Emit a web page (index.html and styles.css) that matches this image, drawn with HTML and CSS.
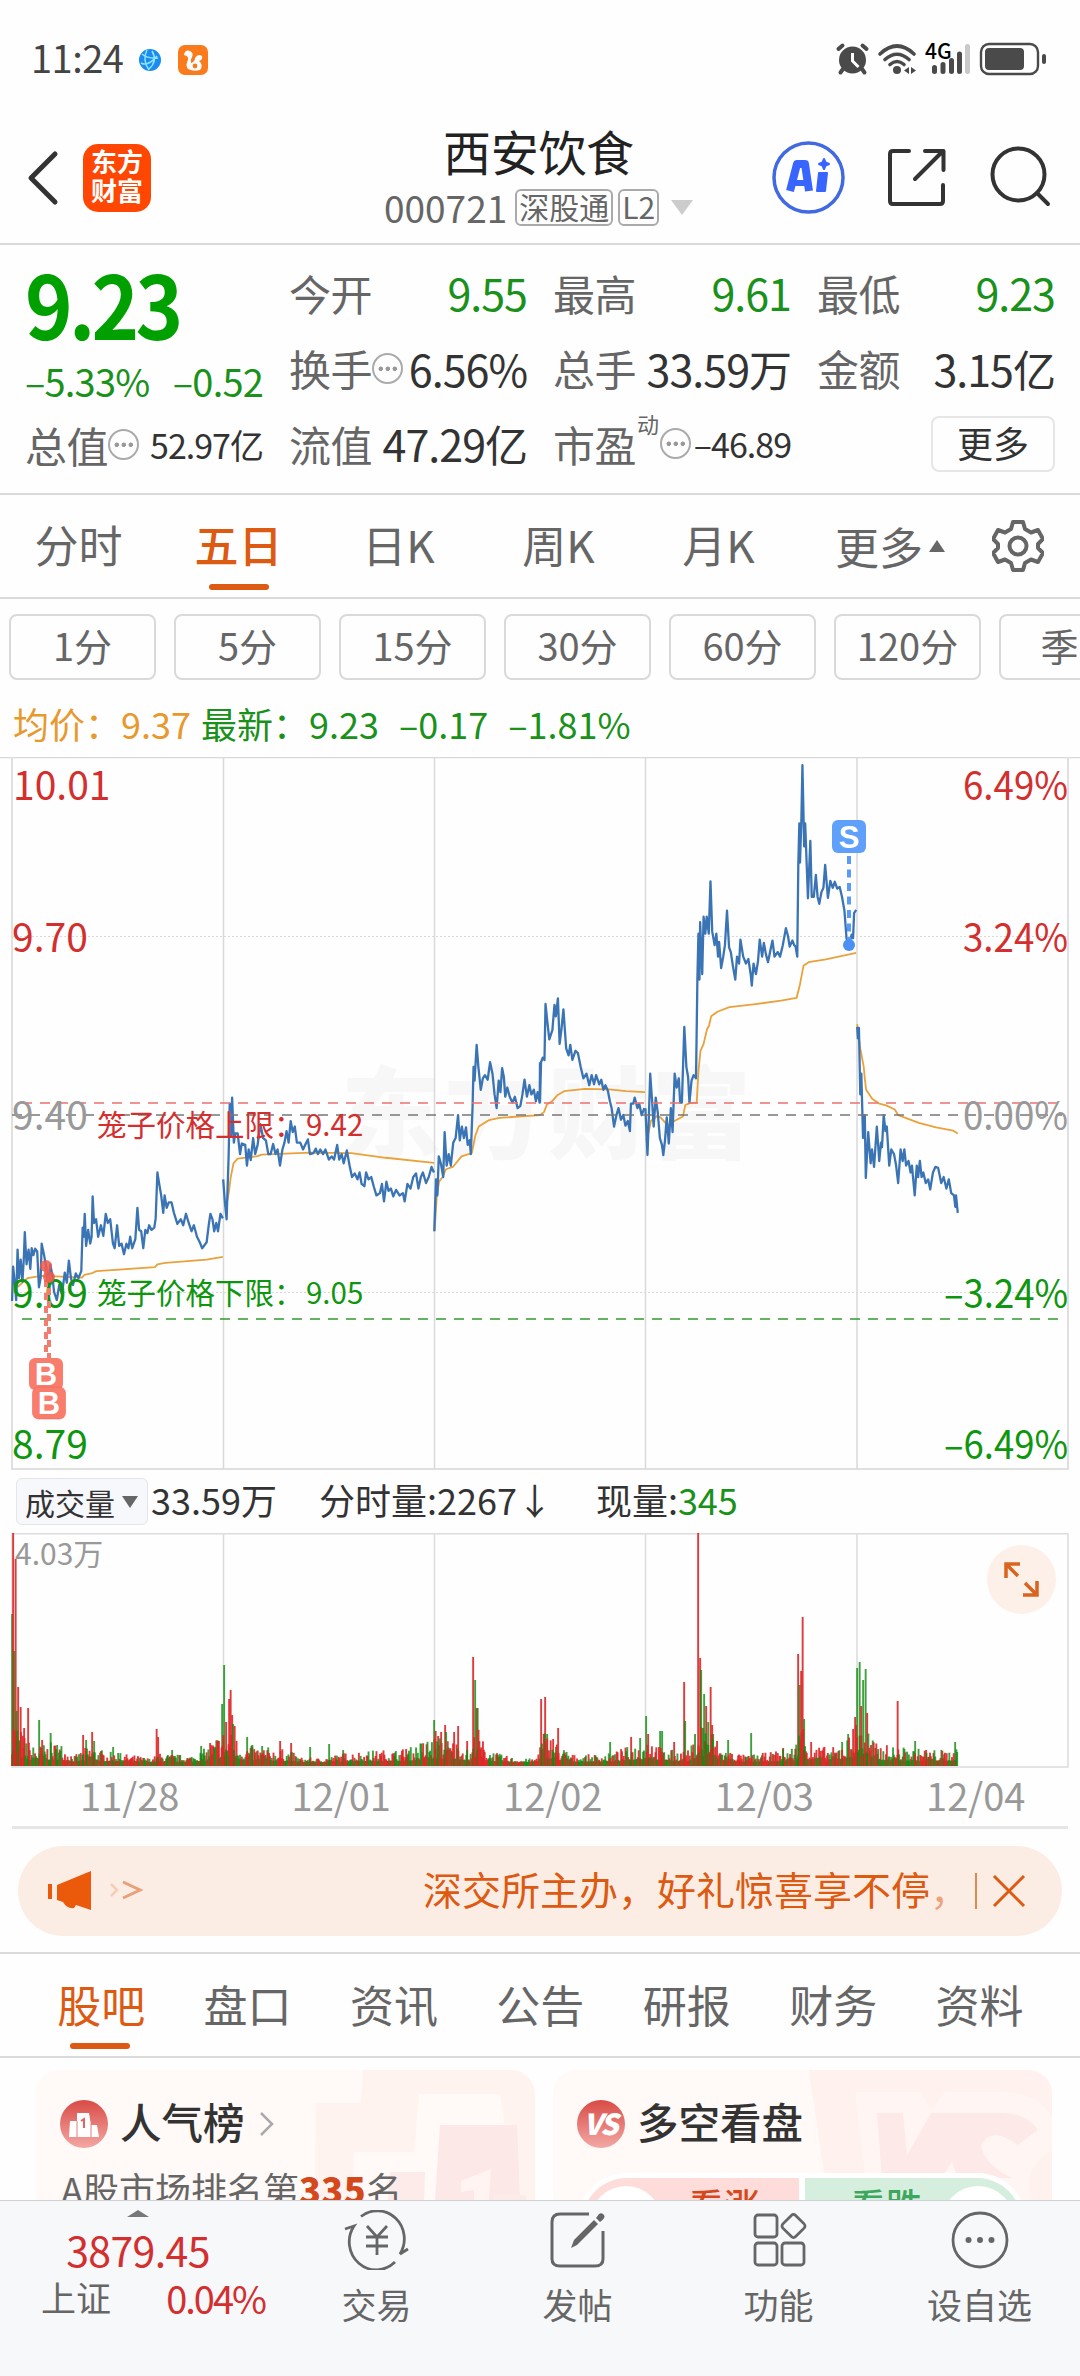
FILE: index.html
```html
<!DOCTYPE html>
<html lang="zh-CN">

<head>
    <meta charset="UTF-8">
    <meta name="viewport" content="width=device-width, initial-scale=1.0">
    <title>西安饮食 000721</title>
    <link rel="stylesheet" href="styles.css">
</head>

<body>
    <!-- 状态栏 -->
    <div class="status">
        <span class="time">11:24</span>
        <svg class="globe" width="22" height="22" viewBox="0 0 22 22">
            <circle cx="11" cy="11" r="11" fill="#1a8cf0" />
            <path d="M3 5Q9 10 19 9M8 1Q3 11 10 21M13 2Q19 12 10 20M2 14Q9 18 18 7" fill="none" stroke="#8fe3ff" stroke-width="1.5" />
        </svg>
        <svg class="uc" width="30" height="30" viewBox="0 0 30 30">
            <rect width="30" height="30" rx="7" fill="#fa7a1c" />
            <path d="M6 10Q7 4 12 6Q16 8 14 12Q12 15 13 18Q17 17 17 13Q20 8 24 11Q25 15 21 16Q26 20 22 25Q16 27 10 24Q7 20 10 15Q11 11 6 10Z" fill="#fff" />
            <circle cx="17" cy="21" r="2.4" fill="#fa7a1c" />
        </svg>
        <svg class="right" width="212" height="36" viewBox="836 42 212 36">
            <g fill="#4a4a4a">
                <circle cx="852.500" cy="60" r="13.500" />
                <path d="M843 69l-2.500 3.500M862 69l2.500 3.500M838.500 49l4-3.500M866.500 49l-4-3.500" stroke="#4a4a4a" stroke-width="4" stroke-linecap="round" />
                <path d="M852.500 53v8l6 6" fill="none" stroke="#fff" stroke-width="3" />
                <circle cx="897" cy="70" r="4" />
                <path d="M909 67v7l-5-3.500zM911 67v7l5-3.500z" />
            </g>
            <g fill="none" stroke="#4a4a4a" stroke-width="3.600" stroke-linecap="round">
                <path d="M880 54Q897 38 914 54M885 59.500Q897 49 909 59.500M890 64.500Q897 58.500 904 64.500" />
            </g>
            <g stroke="#4a4a4a" stroke-width="5" stroke-linecap="round">
                <path d="M934.500 67.500v4M943 64.500v7M951.500 60.500v11M959.500 54v17.500" />
                <path d="M967.500 46.500v25" stroke="#c9c9c9" />
            </g>
            <text x="925" y="59" class="net">4G</text>
            <rect x="981" y="44" width="57" height="30" rx="8" fill="none" stroke="#4a4a4a" stroke-width="2.400" />
            <rect x="985" y="48" width="39" height="22" rx="4" fill="#4a4a4a" />
            <rect x="1042" y="54" width="4" height="10" rx="2" fill="#4a4a4a" />
        </svg>
    </div>

    <!-- 顶部标题 -->
    <div class="header">
        <svg class="back" width="32" height="56" viewBox="0 0 32 56">
            <path d="M28 4L4 28L28 52" fill="none" stroke="#333" stroke-width="5" stroke-linecap="round" stroke-linejoin="round" />
        </svg>
        <div class="logo">东方<br>财富</div>
        <div class="title">
            <h1>西安饮食</h1>
            <div class="code">000721<i>深股通</i><i>L2</i><b></b></div>
        </div>
        <svg class="tools" width="280" height="76" viewBox="772 140 280 76">
            <circle cx="808.500" cy="177.500" r="34.500" fill="none" stroke="#4169e1" stroke-width="3.500" />
            <path d="M790 191L797 164H805L809 191" fill="none" stroke="#3864ff" stroke-width="8" stroke-linejoin="round" />
            <path d="M795 183H807" stroke="#3864ff" stroke-width="6" />
            <path d="M819 173h8l-2 18h-8zM824 159l1.500 3.500 3.500 1.500-3.500 1.500-1.500 3.500-1.500-3.500-3.500-1.500 3.500-1.500z" fill="#3864ff" stroke="#3864ff" stroke-width="2" stroke-linejoin="round" />
            <g fill="none" stroke="#333" stroke-width="4" stroke-linecap="round" stroke-linejoin="round">
                <path d="M909 151H893Q890 151 890 154V201Q890 204 893 204H940Q943 204 943 201V185M925 151H943.500V170M942 152L915 179" />
                <circle cx="1018.500" cy="174.500" r="26" />
                <path d="M1037 193L1048 204" />
            </g>
        </svg>
    </div>

    <!-- 行情 -->
    <div class="quote">
        <div class="col first">
            <div class="price">9.23</div>
            <div class="change"><span>–5.33%</span><span>–0.52</span></div>
            <div class="item"><label>总值</label><em></em><span class="v small">52.97亿</span></div>
        </div>
        <div class="col">
            <div class="item"><label>今开</label><span class="v green">9.55</span></div>
            <div class="item"><label>换手</label><em></em><span class="v">6.56%</span></div>
            <div class="item"><label>流值</label><span class="v">47.29亿</span></div>
        </div>
        <div class="col">
            <div class="item"><label>最高</label><span class="v green">9.61</span></div>
            <div class="item"><label>总手</label><span class="v">33.59万</span></div>
            <div class="item"><label>市盈</label><sup>动</sup><em></em><span class="v small">–46.89</span></div>
        </div>
        <div class="col">
            <div class="item"><label>最低</label><span class="v green">9.23</span></div>
            <div class="item"><label>金额</label><span class="v">3.15亿</span></div>
            <div class="item"><span class="more">更多</span></div>
        </div>
    </div>

    <!-- K线周期 -->
    <div class="period">
        <span>分时</span>
        <span class="on">五日</span>
        <span>日K</span>
        <span>周K</span>
        <span>月K</span>
        <span class="wide">更多<b></b></span>
        <svg width="52" height="54" viewBox="-26 -27 52 54">
            <path d="M-5 -24H5L7 -17L13 -13.500L20 -16L25 -7L20 -2V2L25 7L20 16L13 13.500L7 17L5 24H-5L-7 17L-13 13.500L-20 16L-25 7L-20 2V-2L-25 -7L-20 -16L-13 -13.500L-7 -17Z" fill="none" stroke="#666" stroke-width="4" stroke-linejoin="round" />
            <circle r="8.500" fill="none" stroke="#666" stroke-width="4" />
        </svg>
    </div>
    <div class="minutes">
        <span>1分</span><span>5分</span><span>15分</span><span>30分</span><span>60分</span><span>120分</span><span>季</span>
    </div>
    <div class="latest">
        <span class="orange">均价：9.37</span>
        <span>最新：9.23</span>
        <span class="gap">–0.17</span>
        <span class="gap">–1.81%</span>
    </div>

    <!-- 五日走势 -->
    <svg class="chart" width="1080" height="713" viewBox="0 757 1080 713">
        <text x="341" y="1151" class="mark" textLength="410">东方财富</text>
        <g fill="none" stroke="#d9d9d9" stroke-width="1.500">
            <path d="M0 757.500H1080" />
            <path d="M12 757V1469H1068V757" stroke="#e0e0e0" stroke-width="2" />
            <path d="M223.500 758V1469M434.500 758V1469M645.500 758V1469M857 758V1469" />
            <path d="M12 936.500H1068M12 1292.500H1068" stroke-width="1" stroke-dasharray="2 2" />
        </g>
        <!-- 均价线 -->
        <g class="avg">
            <g transform="translate(0 750) scale(.3444 .4592)">
                <path d="M50 1170L80 1150L120 1145L180 1147L238 1149L245 1143L265 1140L280 1135L450 1126L457 1120L480 1117L600 1110L647 1104" />
                <path d="M658 990L665 960L670 930L678 900L690 890L745 885L760 881L830 879L900 877L1020 878L1120 888L1260 899" />
                <path d="M1262 1048L1268 975L1275 940L1285 930L1295 913L1315 908L1340 885L1370 878L1380 840L1390 820L1420 806L1450 801L1568 795" />
            </g>
            <g transform="translate(540 750) scale(.3444 .4592)">
                <path d="M0 795L12 788L20 772L35 765L50 752L70 743L130 738L200 739L250 743L305 745" />
                <path d="M308 850L316 830L322 808L340 797L350 800L370 817L390 808L415 798L422 773L435 769L455 768L460 700L466 655L475 640L485 608L491 600L497 580L515 570L550 560L620 554L700 546L745 540L755 510L765 470L780 462L830 456L918 442" />
                <path d="M921 597L930 650L940 690L943 715L947 740L965 760L985 770L1005 774L1030 783L1040 795L1100 812L1150 822L1200 829L1213 835" />
            </g>
        </g>
        <!-- 价格线 -->
        <g class="line">
            <g transform="translate(0 750) scale(.3444 .4592)">
                <path d="M35 1200L38 1125L43 1160L47 1198L51 1088L55 1150L60 1110L65 1158L69 1110L72 1050L77 1120L83 1088L88 1130L92 1085L97 1100L102 1086L108 1092L113 1170L118 1150L121 1075L128 1100L135 1130L140 1170L146 1120L152 1145L157 1180L165 1198L172 1165L180 1185L188 1138L194 1160L200 1112L206 1150L212 1165L220 1140L228 1150L236 1135L240 1040L243 1060L246 1010L250 1080L256 1045L262 1075L266 1060L269 972L273 1030L279 1022L285 1060L293 1035L300 1058L307 1010L313 1030L320 1022L328 1075L333 1085L340 1035L346 1080L353 1075L360 1098L367 1075L373 1085L378 1060L384 1085L393 1065L399 997L404 1045L410 1048L416 1085L422 1045L428 1052L433 1035L440 1045L448 1040L452 1020L457 920L463 948L468 970L474 1008L478 970L484 997L490 985L498 985L505 1008L515 1032L525 1022L532 1035L540 1010L548 1030L556 1048L563 1035L572 1060L580 1072L587 1085L600 1072L606 1035L611 1010L617 1022L622 1048L628 1030L633 1048L640 1010L647 1020" />
                <path d="M648 935L653 985L658 1022L664 880L667 770L671 840L674 757L679 855L683 835L690 835L697 880L702 857L712 860L717 905L722 870L728 893L735 845L741 880L748 860L756 815L764 845L772 850L779 880L786 880L793 858L800 880L806 870L813 905L820 870L826 855L832 830L838 855L844 808L850 832L856 820L862 855L872 855L880 870L888 857L894 848L900 880L910 878L917 868L923 880L930 870L938 880L945 870L955 892L963 885L970 892L979 860L985 892L992 880L998 900L1007 872L1015 905L1022 930L1030 922L1038 935L1044 920L1050 945L1058 950L1063 920L1070 935L1078 930L1085 950L1093 970L1103 965L1109 945L1115 983L1122 940L1128 960L1135 955L1142 972L1150 958L1160 970L1170 965L1175 983L1183 945L1192 955L1200 930L1208 922L1215 955L1222 930L1228 920L1237 943L1245 930L1253 908L1260 920" />
                <path d="M1261 1048L1266 935L1270 970L1274 885L1280 900L1287 930L1291 832L1297 905L1303 880L1309 905L1316 855L1323 845L1330 795L1335 850L1341 820L1347 845L1353 822L1358 860L1364 850L1367 880L1372 780L1375 690L1378 720L1384 642L1389 690L1396 740L1402 715L1408 708L1416 718L1423 680L1430 705L1436 750L1442 780L1448 720L1453 745L1458 693L1463 712L1467 755L1473 735L1480 755L1488 768L1495 755L1503 780L1511 775L1517 750L1523 718L1530 755L1537 730L1543 750L1550 740L1556 765L1561 745L1567 768L1568 680" />
            </g>
            <g transform="translate(540 750) scale(.3444 .4592)">
                <path d="M0 768L3 680L8 670L13 675L16 553L21 590L27 630L36 610L42 555L46 580L52 541L57 640L62 610L68 565L76 650L83 665L88 642L94 675L103 655L110 660L118 690L126 715L135 705L143 730L150 708L157 728L163 708L172 728L178 718L184 740L190 730L197 742L203 765L208 780L215 820L222 795L228 780L235 805L242 795L248 818L255 808L261 830L264 770L271 770L275 757L283 780L288 770L295 795L303 780" />
                <path d="M306 780L312 882L316 800L320 705L326 770L330 820L336 757L342 790L348 845L354 860L358 882L363 850L368 800L374 857L380 780L385 832L391 705L397 735L403 715L407 768L412 768L419 603L425 690L430 712L434 768L440 720L446 708L453 715L457 500L460 400L463 500L465 375L471 488L475 363L480 400L484 363L490 400L495 286L500 395L507 425L512 400L517 450L520 418L526 475L532 450L537 425L543 350L549 430L554 440L560 470L567 500L572 450L578 465L582 413L590 450L598 465L605 455L612 490L615 513L620 465L627 488L633 460L638 413L645 450L650 420L656 445L662 462L668 440L675 415L681 450L690 440L697 450L705 425L714 388L720 405L725 428L733 415L738 425L742 428L747 450L750 250L753 160L755 245L759 150L762 33L767 210L770 160L778 323L785 198L789 320L795 320L801 272L806 320L811 335L817 310L823 300L828 250L836 322L843 285L850 300L856 287L863 302L870 298L877 320L884 350L890 410L897 425L905 402L909 410L912 355L918 348" />
                <path d="M921 603L923 628L926 605L930 750L933 705L938 845L943 795L946 932L953 832L960 900L964 870L970 908L978 820L985 895L990 855L993 865L998 795L1003 830L1007 820L1014 905L1020 870L1028 880L1034 905L1040 943L1047 870L1053 895L1058 870L1063 905L1070 895L1076 920L1080 905L1088 970L1094 905L1098 930L1103 895L1108 930L1113 920L1120 943L1127 935L1133 957L1141 920L1148 908L1156 910L1165 943L1172 930L1180 955L1187 935L1194 965L1202 970L1206 995L1208 970L1213 1008" />
            </g>
        </g>
        <!-- 参考线 -->
        <g fill="none" stroke-width="1.500" stroke-dasharray="10 8">
            <path d="M12 1115H1062" stroke="#777" />
            <path d="M22 1103H1062" stroke="#ee7070" />
            <path d="M22 1319H1062" stroke="#2f9a2f" />
        </g>
        <g class="axis">
            <text x="13" y="800" class="up">10.01</text>
            <text x="12" y="952" class="up">9.70</text>
            <text x="12" y="1130" class="flat">9.40</text>
            <text x="12" y="1308" class="down">9.09</text>
            <text x="12" y="1459" class="down">8.79</text>
            <text x="963" y="800" class="up" textLength="105" lengthAdjust="spacingAndGlyphs">6.49%</text>
            <text x="963" y="952" class="up" textLength="105" lengthAdjust="spacingAndGlyphs">3.24%</text>
            <text x="963" y="1130" class="flat" textLength="105" lengthAdjust="spacingAndGlyphs">0.00%</text>
            <text x="944" y="1308" class="down" textLength="124" lengthAdjust="spacingAndGlyphs">–3.24%</text>
            <text x="944" y="1459" class="down" textLength="124" lengthAdjust="spacingAndGlyphs">–6.49%</text>
            <g class="cage">
                <text x="97" y="1136" class="up">笼子价格上限：</text>
                <text x="306" y="1136" class="up">9.42</text>
                <text x="97" y="1304" class="down">笼子价格下限：</text>
                <text x="306" y="1304" class="down">9.05</text>
            </g>
        </g>
        <!-- 买卖点 -->
        <g class="point">
            <path d="M46 1267V1356M49 1275V1380" stroke="#f27c6e" stroke-width="4" stroke-dasharray="7 6" />
            <circle cx="46" cy="1266" r="6" fill="#ee5a4e" opacity=".85" />
            <circle cx="49" cy="1277" r="6" fill="#ee5a4e" opacity=".85" />
            <rect x="29" y="1358" width="34" height="32" rx="6" fill="#f97d6d" />
            <text x="46" y="1385">B</text>
            <rect x="32.500" y="1387" width="33" height="32" rx="6" fill="#f97d6d" stroke="#f25a45" stroke-width=".5" />
            <text x="49" y="1414">B</text>
            <path d="M849 856V940" stroke="#5b9bf8" stroke-width="4" stroke-dasharray="8 5.500" />
            <circle cx="849" cy="945" r="6" fill="#4a90f5" />
            <rect x="832" y="820" width="34" height="33" rx="6" fill="#5fa0fa" />
            <text x="849" y="848">S</text>
        </g>
    </svg>

    <!-- 成交量 -->
    <div class="legend">
        <span class="select">成交量<b></b></span>
        <span>33.59万</span>
        <span class="now">分时量:2267↓</span>
        <span class="cur">现量:<i>345</i></span>
    </div>
    <svg class="volume" width="1080" height="235" viewBox="0 1533 1080 235">
        <g fill="none" stroke="#dcdcdc" stroke-width="1.500">
            <path d="M12 1533.800H1068V1767H12ZM223.500 1534V1766M434.500 1534V1766M645.500 1534V1766M857 1534V1766" />
        </g>
        <g id="bars"></g>
        <text x="15" y="1565" class="max">4.03万</text>
        <circle cx="1021.500" cy="1579.500" r="34.500" fill="#fdf0e9" />
        <path d="M1006 1578V1564H1020M1007 1565L1018 1576M1037 1581V1595H1023M1036 1594L1025 1583" fill="none" stroke="#d9641f" stroke-width="3.500" />
    </svg>
    <div class="dates">
        <span>11/28</span><span>12/01</span><span>12/02</span><span>12/03</span><span>12/04</span>
    </div>

    <!-- 公告条 -->
    <div class="notice">
        <svg width="100" height="44" viewBox="0 0 100 44">
            <path d="M0 15h4v15H0zM9 16L43 2V41L28 36L26 39Q19 40 15 33L9 31Z" fill="#eb5a0a" />
            <path d="M63 15l6 6-6 6" fill="none" stroke="#f6cdb5" stroke-width="2.500" />
            <path d="M75 13L92 21L75 29" fill="none" stroke="#e9a078" stroke-width="3" />
        </svg>
        <p>深交所主办，好礼惊喜享不停<i>，</i></p>
        <svg class="close" width="54" height="36" viewBox="0 0 54 36">
            <path d="M2 0V36" stroke="#d9641f" stroke-width="1.500" />
            <path d="M20 3L50 33M50 3L20 33" stroke="#dd5a12" stroke-width="3" />
        </svg>
    </div>

    <div class="tabs">
        <span class="on">股吧</span><span>盘口</span><span>资讯</span><span>公告</span><span>研报</span><span>财务</span><span>资料</span>
    </div>

    <div class="cards">
        <div class="card">
            <svg class="art" width="499" height="130" viewBox="36 2070 499 130">
                <path d="M363 2070H535V2200H516L500 2094H419L414 2152H354L352 2200H315L316 2103H361Z" fill="#fff3f0" />
                <path d="M440 2125H517L520 2200H435Z" fill="#fce8e6" />
                <path d="M390 2172H425L424 2200H388ZM526 2195H494V2200H526Z" fill="#fcebe8" />
                <path d="M461 2181L491 2169L489 2200H474V2190L461 2192Z" fill="#fff4f2" />
            </svg>
            <div class="name">
                <svg width="48" height="48" viewBox="0 0 48 48">
                    <circle cx="24" cy="24" r="24" fill="url(#red)" />
                    <path d="M9 37l1-16h7v-8h12l2 12h6l2 12z" fill="#fff" />
                    <path d="M17 21v16M31 24v13" stroke="#e37e79" />
                    <path d="M21 21l3-2v9" fill="none" stroke="#df6560" stroke-width="2" />
                    <defs>
                        <linearGradient id="red" x1="0" y1="0" x2="0" y2="1">
                            <stop offset="0" stop-color="#d94b46" />
                            <stop offset="1" stop-color="#f3a8a4" />
                        </linearGradient>
                    </defs>
                </svg>
                <h2>人气榜</h2>
                <svg class="go" width="16" height="26" viewBox="0 0 16 26">
                    <path d="M2 2L13 13L2 24" fill="none" stroke="#aaa" stroke-width="2.500" />
                </svg>
            </div>
            <p>A股市场排名第<strong>335</strong>名</p>
        </div>
        <div class="card">
            <svg class="art" width="499" height="130" viewBox="553 2070 499 130">
                <path d="M809 2070H1052V2200H828Z" fill="#fff1ee" />
                <path d="M855 2092H920L932 2110L945 2092H1000Q1040 2092 1052 2118V2150Q1020 2170 1032 2200H868Z" fill="#fff5f3" />
                <path d="M877 2113H903L907 2155L931 2113H1000Q1025 2112 1038 2130L1018 2145Q990 2125 981 2146Q985 2165 1012 2178H958L952 2162L940 2180H882Z" fill="#fdeae8" />
            </svg>
            <div class="name">
                <svg width="48" height="48" viewBox="0 0 48 48">
                    <circle cx="24" cy="24" r="24" fill="url(#red)" />
                    <text x="23" y="35" class="vs">VS</text>
                </svg>
                <h2>多空看盘</h2>
            </div>
            <div class="vote">
                <span class="rise"><i></i>看涨</span>
                <span class="fall">看跌<i></i></span>
            </div>
        </div>
    </div>

    <!-- 底部导航 -->
    <div class="nav">
        <div class="index">
            <b></b>
            <strong>3879.45</strong>
            <div><span>上证</span><i>0.04%</i></div>
        </div>
        <div class="entry">
            <svg width="66" height="60" viewBox="0 0 66 60">
                <g fill="none" stroke="#666" stroke-width="2.800">
                    <path d="M17 6.500A27 28 0 0 1 56 44L64 39M51 52A27 28 0 0 1 10 16L1 19" />
                    <path d="M23 16L33 27L43 16M33 27V45M22 27H44M22 36H44" />
                </g>
            </svg>
            交易
        </div>
        <div class="entry">
            <svg width="60" height="60" viewBox="0 0 60 60">
                <path d="M41 4H12Q4 4 4 12V49Q4 56 12 56H47Q55 56 55 49V21" fill="none" stroke="#666" stroke-width="3" />
                <path d="M23 38L26 30L46 10L50 14L29 35ZM48 8L51 4Q54 2 56 5Q58 8 52 12Z" fill="#666" />
            </svg>
            发帖
        </div>
        <div class="entry">
            <svg width="60" height="60" viewBox="0 0 60 60">
                <g fill="none" stroke="#666" stroke-width="2.800">
                    <rect x="6" y="5" width="22" height="22" rx="3" />
                    <rect x="6" y="33" width="22" height="22" rx="3" />
                    <rect x="33" y="33" width="22" height="22" rx="3" />
                    <rect x="35.500" y="7" width="18" height="18" rx="3" transform="rotate(45 44.500 16)" />
                </g>
            </svg>
            功能
        </div>
        <div class="entry">
            <svg width="60" height="60" viewBox="0 0 60 60">
                <circle cx="30" cy="30" r="27" fill="none" stroke="#666" stroke-width="2.800" />
                <g fill="#666">
                    <circle cx="18.500" cy="30" r="3" />
                    <circle cx="30" cy="30" r="3" />
                    <circle cx="41.500" cy="30" r="3" />
                </g>
            </svg>
            设自选
        </div>
    </div>
    <script src="volume.js"></script>
</body>

</html>
```
FILE: volume.js
```js
// 成交量柱: [x, 高度, 颜色]
var peaks = [
    [12, 152, 'g'], [13, 233, 'r'], [14, 115, 'g'], [15.5, 207, 'r'], [16.5, 55, 'g'], [18, 79, 'r'], [20.500, 59, 'r'], [24, 38, 'r'], [28, 58, 'r'],
    [39, 46, 'g'], [42, 26, 'r'], [50.500, 33, 'g'], [57, 21, 'g'], [83, 31, 'r'], [86, 26, 'g'], [92, 34, 'r'], [94, 25, 'g'],
    [113, 19, 'g'], [118, 13, 'g'], [156.5, 37, 'r'], [158, 29, 'r'], [172, 16, 'g'], [201, 20, 'g'], [210, 23, 'r'],
    [222, 62, 'g'], [224, 101, 'g'], [226, 44, 'r'], [229, 67, 'r'], [230.500, 76, 'r'], [232, 51, 'r'], [233, 42, 'g'], [234.5, 40, 'r'],
    [247, 29, 'g'], [252, 19, 'r'], [262, 20, 'g'], [280, 25, 'r'], [291, 23, 'r'], [310, 19, 'g'], [329, 22, 'g'], [343, 16, 'g'],
    [406, 17, 'r'], [434, 46, 'g'], [435.5, 35, 'r'], [438, 30, 'r'], [441, 34, 'r'], [445, 41, 'r'], [446, 34, 'g'], [454, 34, 'r'], [458, 40, 'r'], [467, 25, 'r'],
    [473, 109, 'r'], [475, 86, 'g'], [476.500, 58, 'r'], [477.500, 58, 'g'], [541, 67, 'r'], [545, 69, 'r'], [547, 32, 'g'], [553, 27, 'r'], [558, 38, 'r'],
    [610, 24, 'g'], [631, 29, 'r'], [640, 28, 'g'], [646, 50, 'g'], [648, 32, 'r'], [660, 35, 'g'], [662, 35, 'g'], [674, 24, 'r'],
    [684, 84, 'r'], [685, 45, 'g'], [698, 233, 'r'], [700, 108, 'r'], [701, 96, 'g'], [704, 72, 'g'], [706, 60, 'r'], [708, 44, 'g'], [710.5, 79, 'r'], [712, 41, 'r'], [713, 32, 'g'],
    [728, 26, 'g'], [751, 33, 'g'], [783, 18, 'r'], [798, 112, 'r'], [799.500, 81, 'g'], [801, 95, 'r'], [802.500, 149, 'r'], [804, 47, 'g'], [811, 24, 'r'],
    [842, 24, 'g'], [853, 37, 'r'], [855, 49, 'r'], [857, 98, 'g'], [859.500, 104, 'g'], [861, 60, 'r'], [863, 86, 'g'], [865.500, 97, 'g'], [867, 53, 'r'],
    [897.5, 65, 'r'], [915, 25, 'g'], [926, 16, 'r'], [955, 24, 'g'], [957, 14, 'g']
];
// 底部小柱的包络线
var base = [
    [12, 60], [22, 32], [32, 18], [60, 22], [75, 8], [90, 19], [105, 12], [135, 8], [150, 5], [160, 10], [190, 8], [205, 15],
    [222, 36], [234, 30], [245, 19], [270, 16], [290, 13], [300, 6], [320, 5], [350, 12], [395, 14], [410, 16], [430, 28],
    [445, 26], [462, 22], [470, 10], [476, 42], [485, 18], [500, 9], [520, 4], [535, 5], [544, 36], [560, 18], [575, 8], [610, 10],
    [640, 22], [650, 32], [662, 14], [690, 13], [700, 52], [712, 34], [722, 16], [745, 8], [770, 11], [795, 18], [801, 50],
    [810, 18], [835, 16], [855, 42], [866, 42], [876, 20], [905, 16], [930, 14], [957, 14]
];
var seed = 7;
function rand() {
    seed = (seed * 16807) % 2147483647;
    return seed / 2147483647;
}
function envelope(x) {
    for (var i = 1; i < base.length; i++) {
        if (x <= base[i][0]) {
            var a = base[i - 1], b = base[i];
            return a[1] + (b[1] - a[1]) * (x - a[0]) / (b[0] - a[0]);
        }
    }
    return 10;
}
var bars = document.getElementById('bars');
function bar(x, h, type) {
    var r = document.createElementNS('http://www.w3.org/2000/svg', 'rect');
    r.setAttribute('x', x - 0.8);
    r.setAttribute('y', 1766 - h);
    r.setAttribute('width', 1.9);
    r.setAttribute('height', h);
    r.setAttribute('class', type);
    bars.appendChild(r);
}
peaks.forEach(function (p) {
    bar(p[0], p[1], p[2]);
});
for (var x = 12; x < 957; x += 0.88) {
    var k = rand();
    bar(x, 3 + envelope(x) * (0.15 + 0.85 * k * k), rand() > 0.45 ? 'r' : 'g');
}
```
FILE: styles.css
```css
* {
    margin: 0;
    padding: 0;
    box-sizing: border-box;
}

body {
    width: 1080px;
    height: 2376px;
    overflow: hidden;
    display: flex;
    flex-direction: column;
    background: #fefefe;
    color: #333;
    font-family: "Noto Sans CJK SC", "Noto Sans", sans-serif;
    line-height: 1;
}

body > * {
    flex-shrink: 0;
}

i, em {
    font-style: normal;
}

svg {
    display: block;
}

/* 状态栏 */
.status {
    height: 112px;
    padding: 7px 32px 0 31px;
    display: flex;
    align-items: center;
}

.time {
    font-size: 38px;
    letter-spacing: -.5px;
    color: #444;
    padding-bottom: 5px;
    width: 108px;
}

.uc {
    margin-left: 17px;
}

.status .right {
    margin-left: auto;
    overflow: visible;
}

.net {
    font-size: 21px;
    font-weight: 500;
}

/* 标题 */
.header {
    height: 133px;
    border-bottom: 2px solid #dadada;
    padding: 0 28px 0 27px;
    display: flex;
    align-items: center;
}

.logo {
    width: 68px;
    height: 68px;
    margin-left: 24px;
    padding-top: 2px;
    border-radius: 15px;
    background: #ff4703;
    color: #fff;
    font-size: 26px;
    font-weight: 700;
    line-height: 29px;
    text-align: center;
}

.title {
    flex: 1;
    padding-left: 233px;
    margin-top: -4px;
}

.title h1 {
    padding-left: 59px;
    font-size: 48px;
    font-weight: 400;
    letter-spacing: -.3px;
    color: #222;
}

.code {
    display: flex;
    align-items: center;
    margin-top: 15px;
    height: 37px;
    font-size: 37px;
    color: #666;
    white-space: nowrap;
}

.code i {
    height: 37px;
    margin-left: 5px;
    padding: 0 2px;
    border: 2px solid #aaa;
    border-radius: 6px;
    font-size: 30px;
    line-height: 31px;
}

.code i:first-of-type {
    margin-left: 8px;
}

.code b {
    margin-left: 12px;
    border: 11px solid transparent;
    border-top: 15px solid #ccc;
    border-bottom: 0;
}

/* 行情 */
.quote {
    height: 250px;
    padding: 12px 25px 0;
    border-bottom: 2px solid #dadada;
    display: grid;
    grid-template-columns: repeat(4, 238px);
    gap: 26px;
}

.price {
    height: 100px;
    font-size: 87px;
    font-weight: 700;
    line-height: 90px;
    letter-spacing: -4px;
    color: #00a000;
    transform: scaleX(.93);
    transform-origin: left;
}

.change {
    height: 52px;
    display: flex;
    justify-content: space-between;
    font-size: 38px;
    line-height: 48px;
    letter-spacing: -.8px;
    color: #1a911a;
}

.item {
    height: 75.5px;
    display: flex;
    align-items: center;
    padding-bottom: 4px;
}

.item label {
    font-size: 42px;
    color: #666;
    letter-spacing: -.5px;
}

.item em {
    width: 31px;
    height: 31px;
    border: 2px solid #aaa;
    border-radius: 50%;
    background: radial-gradient(circle, #999 2px, transparent 2.500px) center / 7.500px 7.500px no-repeat, radial-gradient(circle, #999 2px, transparent 2.500px) 3px center / 7.500px 7.500px no-repeat, radial-gradient(circle, #999 2px, transparent 2.500px) 17px center / 7.500px 7.500px no-repeat;
}

.item .v {
    margin-left: auto;
    font-size: 43px;
    letter-spacing: -1px;
    white-space: nowrap;
}

.item .small {
    font-size: 34px;
}

.item .green {
    color: #1a911a;
}

.item sup {
    width: 24px;
    font-size: 22px;
    color: #666;
    align-self: flex-start;
    padding: 4px 0 0 1px;
}

.more {
    width: 124px;
    height: 56px;
    margin-left: auto;
    border: 2px solid #e6e6e6;
    border-radius: 8px;
    font-size: 36px;
    line-height: 48px;
    text-align: center;
}

/* 周期 */
.period {
    height: 104px;
    border-bottom: 2px solid #dadada;
    display: flex;
    align-items: center;
    color: #666;
    font-size: 44px;
}

.period span {
    width: 160px;
    height: 102px;
    padding-right: 3px;
    line-height: 98px;
    text-align: center;
}

.period .on {
    padding-right: 3px;
    font-weight: 500;
}

.period .wide {
    width: 184px;
    display: flex;
    justify-content: center;
    align-items: center;
    padding: 0 4px 0 0;
}

.period .wide b {
    margin-left: 6px;
    border: 8px solid transparent;
    border-top: 0;
    border-bottom: 12px solid #666;
}

.period svg {
    margin-left: 8px;
}

.on {
    position: relative;
    color: #dd5a12;
}

.on::after {
    content: '';
    position: absolute;
    left: 50%;
    bottom: 7px;
    width: 60px;
    height: 6px;
    margin-left: -31px;
    border-radius: 3px;
    background: #dd5a12;
}

.minutes {
    display: flex;
    gap: 18px;
    padding: 15px 0 0 9px;
    height: 96px;
    overflow: hidden;
}

.minutes span {
    flex: 0 0 147px;
    height: 66px;
    border: 2px solid #d9d9d9;
    border-radius: 8px;
    font-size: 38px;
    line-height: 58px;
    text-align: center;
    color: #666;
}

.minutes span:last-child {
    padding-right: 26px;
}

.latest {
    height: 62px;
    padding: 7px 0 0 13px;
    display: flex;
    font-size: 36px;
    line-height: 42px;
    color: #1a911a;
}

.latest span + span {
    margin-left: 10px;
}

.latest span.gap {
    margin-left: 20px;
}

.latest .orange {
    color: #e8992c;
}

/* 走势图 */
.mark {
    font-size: 100px;
    font-weight: 900;
    fill: #f7f7f7;
}

.avg path, .line path {
    fill: none;
    stroke-linejoin: round;
    vector-effect: non-scaling-stroke;
}

.avg path {
    stroke: #e9a23b;
    stroke-width: 1.800px;
}

.line path {
    stroke: #3a74b4;
    stroke-width: 2.300px;
}

.axis {
    font-size: 39px;
}

.cage {
    font-size: 29.500px;
}

.up {
    fill: #d32f2f;
}

.down {
    fill: #0f960f;
}

.flat {
    fill: #999;
}

.point text {
    font-family: "Liberation Sans", sans-serif;
    font-size: 31px;
    font-weight: 700;
    fill: #fff;
    text-anchor: middle;
}

/* 成交量 */
.legend {
    height: 63px;
    padding: 8px 0 0 16px;
    display: flex;
    font-size: 36px;
    line-height: 42px;
    white-space: nowrap;
}

.select {
    width: 132px;
    height: 47px;
    margin-right: 3px;
    padding-left: 8px;
    display: flex;
    align-items: center;
    background: #f7f8fb;
    border: 1px solid #e4e5e8;
    border-radius: 6px;
    font-size: 30px;
    line-height: 40px;
}

.select b {
    margin-left: 7px;
    border: 8px solid transparent;
    border-top: 12px solid #666;
    border-bottom: 0;
}

.now {
    margin-left: 42px;
}

.cur {
    margin-left: 43px;
}

.cur i {
    color: #1a911a;
}

.max {
    font-size: 30px;
    fill: #999;
}

.r {
    fill: #dc2626;
    opacity: .9;
}

.g {
    fill: #0e8a0e;
    opacity: .8;
}

.dates {
    height: 61px;
    margin: 0 12px;
    padding-left: 12px;
    border-bottom: 3px solid #e6e6e6;
    display: grid;
    grid-template-columns: repeat(5, 211.500px);
    font-size: 38px;
    line-height: 54px;
    text-align: center;
    color: #999;
}

/* 公告条 */
.notice {
    height: 90px;
    margin: 17px 18px 16px;
    padding: 0 34px 0 30px;
    display: flex;
    align-items: center;
    border-radius: 45px;
    background: #fcede4;
}

.notice p {
    flex: 1;
    padding: 0 0 5px 275px;
    font-size: 39px;
    color: #dd5a12;
    white-space: nowrap;
}

.notice p i {
    opacity: .5;
}

.notice .close {
    flex-shrink: 0;
}

.tabs {
    height: 106px;
    padding: 0 27px 0 28px;
    border-top: 2px solid #dadada;
    border-bottom: 2px solid #dadada;
    display: grid;
    grid-template-columns: repeat(7, 146.400px);
    font-size: 44px;
    line-height: 100px;
    text-align: center;
    color: #666;
}

/* 卡片 */
.cards {
    height: 142px;
    padding: 12px 36px 0;
    display: grid;
    grid-template-columns: 499px 499px;
    gap: 18px;
    overflow: hidden;
}

.card {
    position: relative;
    height: 200px;
    border-radius: 24px;
    overflow: hidden;
    background: #fff9f7;
}

.art {
    position: absolute;
    left: 0;
    top: 0;
}

.name {
    position: relative;
    display: flex;
    align-items: center;
    height: 48px;
    margin: 30px 0 0 24px;
}

.name h2 {
    padding: 0 14px 6px 12px;
    font-size: 41.500px;
    font-weight: 500;
    line-height: 42px;
}

.card p {
    position: relative;
    padding: 20px 0 0 25px;
    font-size: 36px;
    line-height: 40px;
    color: #666;
}

.card p strong {
    font-weight: 900;
    letter-spacing: .5px;
    color: #d5481c;
}

.vs {
    font-size: 29px;
    font-style: italic;
    font-weight: 900;
    letter-spacing: -2px;
    text-anchor: middle;
    fill: #fff;
}

.vote {
    position: relative;
    display: flex;
    justify-content: space-between;
    width: 450px;
    height: 100px;
    margin: 25px 0 0 24px;
    border: 5px solid #fff;
    border-radius: 50px;
    overflow: hidden;
    background: #fff;
    font-size: 36px;
    font-weight: 500;
}

.vote span {
    width: 217px;
    display: flex;
    padding-top: 8px;
}

.vote i {
    width: 72px;
    height: 72px;
    border-radius: 50%;
    background: #fff;
}

.rise {
    background: #fddcd9;
    color: #d5481c;
}

.rise i {
    margin: 0 26px 0 8px;
}

.fall {
    background: #d6eedd;
    color: #3fa660;
    justify-content: flex-end;
}

.fall i {
    margin: 0 8px 0 20px;
}

/* 底部导航 */
.nav {
    height: 176px;
    border-top: 1px solid #d0d1d4;
    background: #f7f8fa;
    display: flex;
    color: #666;
}

.index {
    width: 276px;
    display: flex;
    flex-direction: column;
    align-items: center;
    padding-top: 9px;
}

.index b {
    border: 11px solid transparent;
    border-top: 0;
    border-bottom: 7px solid #77787c;
}

.index strong {
    margin-top: 12px;
    font-size: 41px;
    font-weight: 400;
    letter-spacing: -.6px;
    color: #d32f2f;
}

.index div {
    width: 100%;
    margin-top: 9px;
    padding: 0 11px 0 41px;
    display: flex;
    justify-content: space-between;
    font-size: 35px;
}

.index i {
    font-size: 38px;
    letter-spacing: -2px;
    color: #d32f2f;
}

.entry {
    flex: 1;
    display: flex;
    flex-direction: column;
    align-items: center;
    padding-top: 9px;
    font-size: 35px;
}

.entry svg {
    margin-bottom: 16px;
}
```
